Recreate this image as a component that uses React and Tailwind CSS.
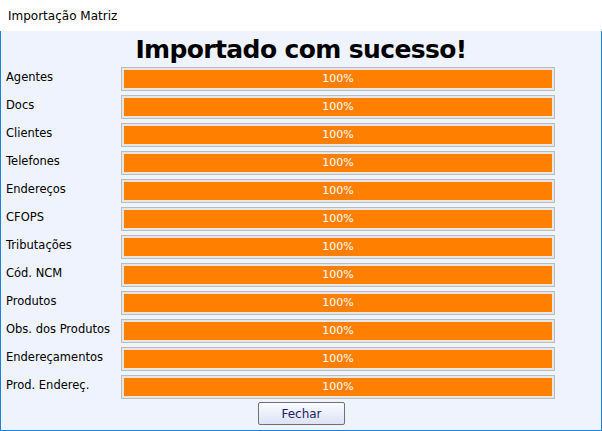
const rows = [
  'Agentes',
  'Docs',
  'Clientes',
  'Telefones',
  'Endereços',
  'CFOPS',
  'Tributações',
  'Cód. NCM',
  'Produtos',
  'Obs. dos Produtos',
  'Endereçamentos',
  'Prod. Endereç.',
];

export default function App() {
  return (
    <div className="w-[602px] h-[431px] flex flex-col bg-white text-black" style={{ fontFamily: '"DejaVu Sans", Tahoma, sans-serif' }}>
      {/* title bar */}
      <div className="h-[31px] flex items-center pl-[8px] text-[12px] bg-white">Importação Matriz</div>

      {/* window body */}
      <div className="flex-1 flex flex-col bg-[#eef3fd] border-x border-b border-[#1883d7]">
        <h1 className="h-[36px] flex items-center justify-center text-[25px] font-bold leading-none tracking-tight pt-[1px]">
          Importado com sucesso!
        </h1>

        <div className="flex flex-col gap-[4px] pl-[5px]">
          {rows.map((label) => (
            <div key={label} className="flex h-[24px]">
              <div className="w-[115px] text-[11.5px] leading-[16px] pt-[2px]">{label}</div>
              <div className="w-[434px] h-[24px] border border-[#bcbcbc] bg-[#e6e6e6] p-[2px]">
                <div className="h-full w-full bg-[#ff8000] flex items-center justify-center text-white text-[11px]">
                  100%
                </div>
              </div>
            </div>
          ))}
        </div>

        <div className="flex justify-center pt-[3px]">
          <button className="w-[87px] h-[23px] border border-[#707070] rounded-[2px] bg-gradient-to-b from-[#fafbff] to-[#dde3f5] text-[12px] text-[#1c1c6c] ml-[1px]">
            Fechar
          </button>
        </div>
      </div>
    </div>
  );
}
